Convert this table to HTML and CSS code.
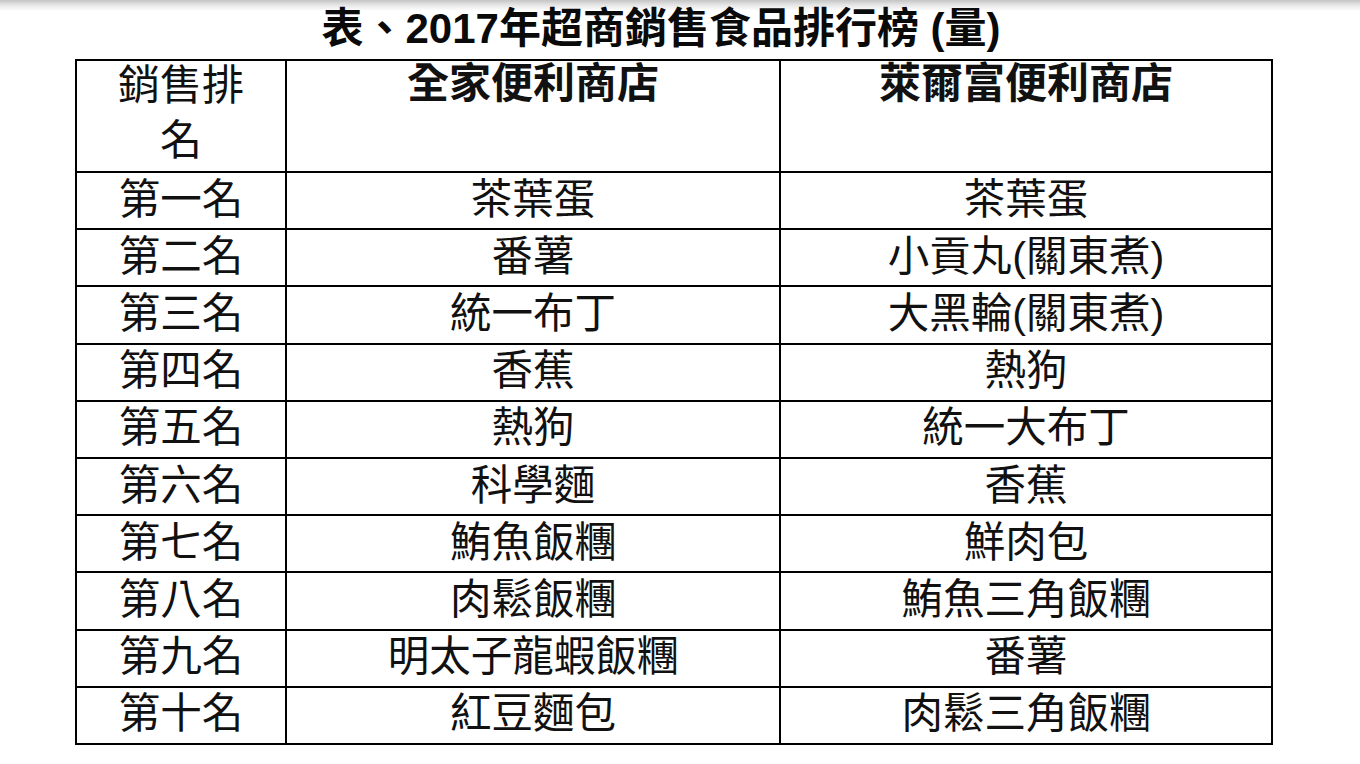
FILE: index.html
```html
<!DOCTYPE html>
<html lang="zh-Hant">
<head>
<meta charset="utf-8">
<title>2017年超商銷售食品排行榜</title>
<link rel="stylesheet" href="styles.css">
</head>
<body>
<div class="page">
  <h1 class="title">表、2017年超商銷售食品排行榜 (量)</h1>
  <table class="rank">
    <colgroup>
      <col class="c1">
      <col class="c2">
      <col class="c3">
    </colgroup>
    <thead>
      <tr>
        <th class="h-rank"><div class="h-rank-in">銷售排<br>名</div></th>
        <th class="h-store"><div class="h-store-in">全家便利商店</div></th>
        <th class="h-store"><div class="h-store-in">萊爾富便利商店</div></th>
      </tr>
    </thead>
    <tbody>
      <tr><td>第一名</td><td>茶葉蛋</td><td>茶葉蛋</td></tr>
      <tr><td>第二名</td><td>番薯</td><td>小貢丸(關東煮)</td></tr>
      <tr><td>第三名</td><td>統一布丁</td><td>大黑輪(關東煮)</td></tr>
      <tr><td>第四名</td><td>香蕉</td><td>熱狗</td></tr>
      <tr><td>第五名</td><td>熱狗</td><td>統一大布丁</td></tr>
      <tr><td>第六名</td><td>科學麵</td><td>香蕉</td></tr>
      <tr><td>第七名</td><td>鮪魚飯糰</td><td>鮮肉包</td></tr>
      <tr><td>第八名</td><td>肉鬆飯糰</td><td>鮪魚三角飯糰</td></tr>
      <tr><td>第九名</td><td>明太子龍蝦飯糰</td><td>番薯</td></tr>
      <tr><td>第十名</td><td>紅豆麵包</td><td>肉鬆三角飯糰</td></tr>
    </tbody>
  </table>
</div>
</body>
</html>
```

FILE: styles.css
```css
html, body {
  margin: 0;
  padding: 0;
}
body {
  width: 1360px;
  height: 764px;
  overflow: hidden;
  background: linear-gradient(to bottom, #c4c4c4 0px, #e6e6e6 5px, #ffffff 11px, #ffffff 100%);
  font-family: "Liberation Sans", "Noto Sans CJK TC", sans-serif;
  color: #111;
}
.page {
  width: 1196px;
  margin-left: 75px;
}
.title {
  margin: 0;
  height: 59px;
  line-height: 58px;
  font-size: 42px;
  font-weight: bold;
  text-align: center;
  padding-right: 24px;
  color: #0a0a0a;
  white-space: nowrap;
}
.rank {
  width: 1196px;
  table-layout: fixed;
  border-collapse: collapse;
}
.c1 { width: 210px; }
.c2 { width: 494px; }
.c3 { width: 492px; }
.rank th,
.rank td {
  border: 2px solid #000;
  padding: 0;
  text-align: center;
}
.rank th {
  height: 110px;
  vertical-align: top;
  font-size: 42px;
}
.h-rank {
  font-weight: normal;
}
.h-rank-in {
  line-height: 55px;
  margin-top: -3px;
}
.h-store {
  font-weight: bold;
}
.h-store-in {
  line-height: 46px;
}
.rank td {
  height: 53.2px;
  font-size: 41.5px;
  line-height: 46px;
  vertical-align: middle;
  padding-bottom: 2px;
}
```
